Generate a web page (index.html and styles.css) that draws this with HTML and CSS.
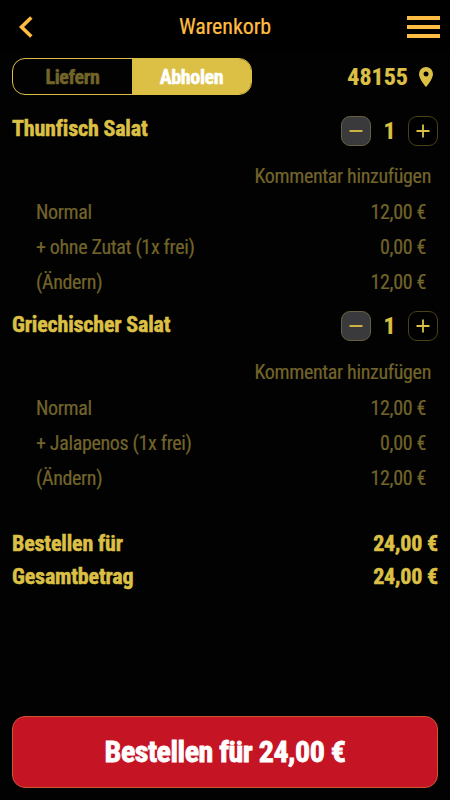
FILE: index.html
```html
<!DOCTYPE html>
<html lang="de">
<head>
<meta charset="utf-8">
<title>Warenkorb</title>
<link rel="stylesheet" href="styles.css">
</head>
<body>
<header class="bar">
  <svg class="back" width="16" height="22" viewBox="0 0 16 22"><path d="M13.300 1.500 3.500 11l9.800 9.500" fill="none" stroke="currentColor" stroke-width="3.600"/></svg>
  <h1 class="bar-title">Warenkorb</h1>
  <div class="menu"><i></i><i></i><i></i></div>
</header>
<main class="cart">
  <div class="mode">
    <div class="toggle"><div class="tab">Liefern</div><div class="tab active">Abholen</div></div>
    <div class="zip"><span>48155</span><svg width="14" height="20" viewBox="0 0 14 20"><path fill="currentColor" fill-rule="evenodd" d="M7 0a7 7 0 0 0-7 7c0 5.200 7 13 7 13s7-7.800 7-13a7 7 0 0 0-7-7zm0 4.500a2.500 2.500 0 1 1 0 5 2.500 2.500 0 0 1 0-5z"/></svg></div>
  </div>
  <section class="item">
    <div class="head"><h2>Thunfisch Salat</h2>
      <div class="stepper"><button class="step minus"><svg width="14" height="14" viewBox="0 0 14 14"><path d="M.5 7h13"/></svg></button><b class="count">1</b><button class="step"><svg width="14" height="14" viewBox="0 0 14 14"><path d="M.5 7h13M7 .5v13"/></svg></button></div></div>
    <div class="comment">Kommentar hinzufügen</div>
    <div class="row"><span>Normal</span><span>12,00 €</span></div>
    <div class="row"><span>+ ohne Zutat (1x frei)</span><span>0,00 €</span></div>
    <div class="row"><span>(Ändern)</span><span>12,00 €</span></div>
  </section>
  <section class="item">
    <div class="head"><h2>Griechischer Salat</h2>
      <div class="stepper"><button class="step minus"><svg width="14" height="14" viewBox="0 0 14 14"><path d="M.5 7h13"/></svg></button><b class="count">1</b><button class="step"><svg width="14" height="14" viewBox="0 0 14 14"><path d="M.5 7h13M7 .5v13"/></svg></button></div></div>
    <div class="comment">Kommentar hinzufügen</div>
    <div class="row"><span>Normal</span><span>12,00 €</span></div>
    <div class="row"><span>+ Jalapenos (1x frei)</span><span>0,00 €</span></div>
    <div class="row"><span>(Ändern)</span><span>12,00 €</span></div>
  </section>
  <div class="totals">
    <div class="total"><span>Bestellen für</span><span>24,00 €</span></div>
    <div class="total"><span>Gesamtbetrag</span><span>24,00 €</span></div>
  </div>
  <button class="order">Bestellen für 24,00 €</button>
</main>
</body>
</html>
```
FILE: styles.css
```css
* { box-sizing: border-box; }
body {
  margin: 0;
  height: 800px;
  display: flex;
  flex-direction: column;
  background: #020202;
  color: #dcc045;
  font-family: "Roboto Condensed", Roboto, sans-serif;
  font-stretch: 75%;
  font-size: 20px;
  letter-spacing: -0.34px;
  -webkit-text-stroke: 0.2px currentColor;
  white-space: nowrap;
}
button { font: inherit; padding: 0; }
h1, h2 { margin: 0; }
.bar {
  height: 53px;
  padding: 0 10px 0 18px;
  display: grid;
  grid-template-columns: 32px 1fr 33px;
  align-items: center;
  background: #000;
  color: #ffbc42;
}
.bar-title { font-size: 22px; font-weight: 400; letter-spacing: -0.1px; text-align: center; padding-right: 7px; }
.menu { display: flex; flex-direction: column; gap: 5px; }
.menu i { height: 4px; background: #ffbc42; }
.cart { flex: 1; display: flex; flex-direction: column; padding: 5px 12px 12px; }
.mode { height: 37px; margin-bottom: 20px; display: flex; justify-content: space-between; }
.toggle { width: 240px; display: flex; border: 1px solid #dcc045; border-radius: 13px; overflow: hidden; -webkit-text-stroke-width: 0.5px; }
.tab { flex: 1; display: flex; align-items: center; justify-content: center; font-weight: 700; color: #73652a; }
.tab.active { background: #dcc045; color: #fff; }
.zip { display: flex; align-items: center; gap: 11px; padding-right: 5px; font-size: 24px; font-weight: 700; letter-spacing: 0; }
.item { height: 195.500px; }
.head { height: 31px; display: flex; justify-content: space-between; align-items: center; }
h2 { font-size: 22px; font-weight: 700; line-height: 28px; letter-spacing: -0.17px; padding-bottom: 3px; -webkit-text-stroke-width: 0.5px; }
.stepper { display: flex; align-items: center; }
.step {
  width: 30px; height: 30px; display: flex; align-items: center; justify-content: center;
  background: #000; border: 1px solid #4b4018; border-radius: 9px;
}
.step.minus { background: #3a393b; border-color: #686042; }
.step path { stroke: #dcc045; stroke-width: 1.800; }
.count { width: 37px; text-align: center; font-size: 24px; letter-spacing: 0; }
.comment { height: 37px; margin-top: 12px; padding-right: 7px; line-height: 36px; text-align: right; color: #73652a; }
.row { height: 35px; padding: 0 12px 0 24px; line-height: 35px; display: flex; justify-content: space-between; color: #73652a; }
.totals { margin-top: 21px; font-size: 22px; font-weight: 700; letter-spacing: -0.17px; -webkit-text-stroke-width: 0.5px; }
.total { height: 33px; line-height: 33px; display: flex; justify-content: space-between; }
.order {
  margin-top: auto; height: 72px; padding-bottom: 2px; border: 1px solid #cc5532; border-radius: 13px;
  background: #c51424; color: #fff; font-size: 30px; font-weight: 700; letter-spacing: -0.48px;
  -webkit-text-stroke: 0.8px #fff;
}
```
